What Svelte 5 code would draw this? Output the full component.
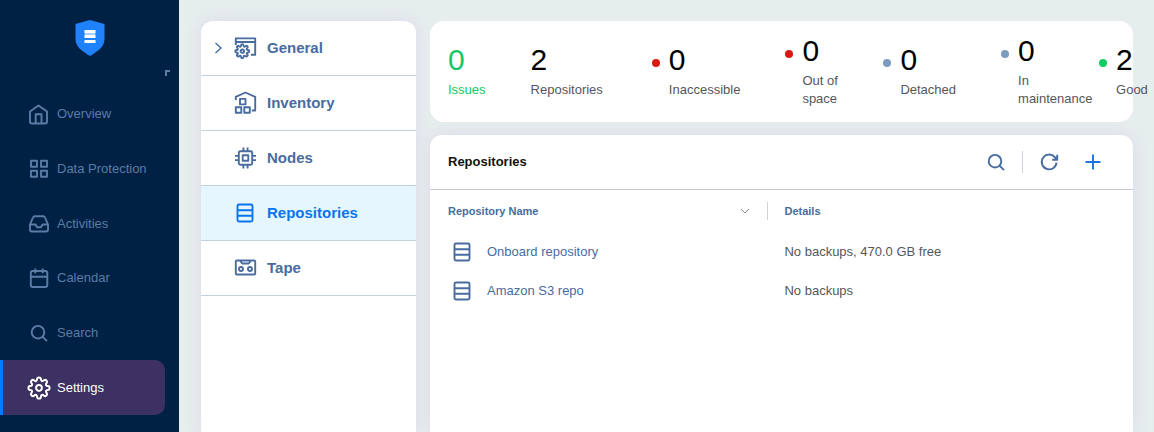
<script>
let active_page = 'Settings';
let active_section = 'Repositories';

const pages = [
    { name: 'Overview', icon: 'home' },
    { name: 'Data Protection', icon: 'grid' },
    { name: 'Activities', icon: 'inbox' },
    { name: 'Calendar', icon: 'calendar' },
    { name: 'Search', icon: 'search' },
    { name: 'Settings', icon: 'gear' },
];

const sections = [
    { name: 'General', icon: 'general', expandable: true },
    { name: 'Inventory', icon: 'inventory' },
    { name: 'Nodes', icon: 'nodes' },
    { name: 'Repositories', icon: 'repo' },
    { name: 'Tape', icon: 'tape' },
];

const states = [
    { count: 0, label: 'Inaccessible', kind: 'error' },
    { count: 0, label: 'Out of space', kind: 'error', narrow: true },
    { count: 0, label: 'Detached', kind: 'idle' },
    { count: 0, label: 'In maintenance', kind: 'idle', narrow: true },
    { count: 2, label: 'Good', kind: 'good' },
];

const repositories = [
    { name: 'Onboard repository', details: 'No backups, 470.0 GB free' },
    { name: 'Amazon S3 repo', details: 'No backups' },
];

// closed cog outline with eight teeth, smoothed through the middle of each edge
const cog = (cx, cy, inner, outer) => {
    const pts = [];
    for (let i = 0; i < 8; i++) {
        const a = (i * Math.PI) / 4;
        for (const [da, r] of [[-0.26, inner], [-0.17, outer], [0.17, outer], [0.26, inner]]) {
            pts.push([cx + r * Math.sin(a + da), cy - r * Math.cos(a + da)]);
        }
    }
    const mid = (p, q) => `${((p[0] + q[0]) / 2).toFixed(2)} ${((p[1] + q[1]) / 2).toFixed(2)}`;
    let d = 'M' + mid(pts[pts.length - 1], pts[0]);
    pts.forEach((p, i) => {
        d += `Q${p[0].toFixed(2)} ${p[1].toFixed(2)} ${mid(p, pts[(i + 1) % pts.length])}`;
    });
    return d + 'Z';
};

const icons = {
    home: 'M3 9.5 11.5 3.500 20 9.5V19.500a2 2 0 0 1-2 2H5a2 2 0 0 1-2-2ZM8.7 21.500v-9.3h5.8V21.500',
    grid: 'M4 3.8h6v6H4ZM14 3.8h6v6h-6ZM4 13.8h6v6H4ZM14 13.8h6v6h-6Z',
    inbox: 'M3 12.500 6 5.500a2 2 0 0 1 1.800-1.300h8.400A2 2 0 0 1 18 5.500l3 7V17.500a2 2 0 0 1-2 2H5a2 2 0 0 1-2-2ZM3 12.500h5.500l1.500 2.700h4l1.500-2.700H21',
    calendar: 'M5.500 5h13A1.800 1.800 0 0 1 20.300 6.800V19a2 2 0 0 1-2 2H5.800a2 2 0 0 1-2-2V6.800A1.800 1.800 0 0 1 5.500 5ZM3.800 10.700h16.500M8.300 2.600v4.600M15.700 2.600v4.600',
    search: 'M17.300 11.200a6.300 6.300 0 1 1-12.600 0a6.300 6.300 0 0 1 12.600 0ZM15.500 15.700l4.500 4.500',
    gear: cog(12, 12, 7.6, 10.7) + 'M14.900 12a2.900 2.900 0 1 1-5.800 0a2.900 2.900 0 0 1 5.800 0Z',
    general: 'M2.800 9V2.400h19.400V18.800H18M2.800 6h19.400' + cog(9.300, 15.200, 4.900, 7.100) + 'M11 15.200a1.700 1.700 0 1 1-3.400 0a1.700 1.700 0 0 1 3.400 0Z',
    inventory: 'M2.800 9V5.800L12.500 1.500l9.700 4.300V19.500H18.800M7 7.900h5.500v5.500H7ZM2.800 16.200h5.500v5.500H2.800ZM11.300 16.200h5.500v5.500h-5.500Z',
    nodes: 'M7.300 5.300h10.400a1.500 1.500 0 0 1 1.500 1.500v10.400a1.500 1.500 0 0 1-1.500 1.500H7.300a1.500 1.500 0 0 1-1.500-1.500V6.800a1.500 1.500 0 0 1 1.500-1.500ZM9.700 9.200h5.600v5.600H9.700ZM10.400 1.500v3.800M14.600 1.500v3.800M10.400 18.700v3.800M14.600 18.700v3.800M2 9.900h3.800M2 14.100h3.800M19.200 9.900H23M19.200 14.100H23',
    repo: 'M6 3.500h12a1.500 1.500 0 0 1 1.500 1.500v14a1.500 1.500 0 0 1-1.500 1.500H6a1.500 1.500 0 0 1-1.500-1.500v-14A1.500 1.500 0 0 1 6 3.500ZM4.500 9.200h15M4.500 14.800h15',
    tape: 'M3.800 4.500h17.400a1 1 0 0 1 1 1v12a1 1 0 0 1-1 1H3.800a1 1 0 0 1-1-1v-12a1 1 0 0 1 1-1ZM7 4.500l2.200 3h6.600l2.200-3M10 13a2 2 0 1 1-4 0a2 2 0 0 1 4 0ZM19 13a2 2 0 1 1-4 0a2 2 0 0 1 4 0Z',
    refresh: 'M19.500 12.600A7.400 7.400 0 1 1 17.600 7L20 9.300M20.200 4.800v5h-5',
    plus: 'M12 4.500v15M4.500 12h15',
};
</script>

{#snippet icon(name)}
    <svg class="icon {name}" viewBox="0 0 24 24" aria-hidden="true"><path d={icons[name]} /></svg>
{/snippet}

<div class="app">
    <aside>
        <svg class="logo" viewBox="0 0 30 36" role="img" aria-label="Home">
            <path d="M15 0 29.500 4V19C29.500 27 23 31 15 36C7 31 .5 27 .5 19V4Z" fill="#1f82fb" />
            <path d="M9.500 10h11v3h-11ZM9.500 15h11v3h-11ZM9.500 20h11v3h-11Z" fill="#fff" />
            <path d="M9.500 13h11v2h-11Z" fill="#a9cdfd" />
        </svg>
        <button class="collapse" aria-label="Collapse menu">
            <svg viewBox="0 0 6 6"><path d="M1 6V1H5" /></svg>
        </button>
        <nav class="pages">
            {#each pages as p}
                <a href="#{p.icon}" class:active={p.name == active_page}>
                    {@render icon(p.icon)}
                    {p.name}
                </a>
            {/each}
        </nav>
    </aside>

    <nav class="sections">
        {#each sections as s}
            <a href="#{s.icon}" class:active={s.name == active_section}>
                <svg class="arrow" viewBox="0 0 10 14" aria-hidden="true">
                    {#if s.expandable}<path d="M2.500 2 8 7 2.500 12" />{/if}
                </svg>
                {@render icon(s.icon)}
                {s.name}
            </a>
        {/each}
    </nav>

    <main>
        <section class="stats">
            <div class="stat issues">
                <span class="count">0</span>
                <span class="label">Issues</span>
            </div>
            <div class="stat">
                <span class="count">2</span>
                <span class="label">Repositories</span>
            </div>
            <div class="divider"></div>
            {#each states as s}
                <div class="stat state" class:narrow={s.narrow}>
                    <i class="dot {s.kind}"></i>
                    <span class="count">{s.count}</span>
                    <span class="label">{s.label}</span>
                </div>
            {/each}
        </section>

        <section class="panel">
            <header>
                <h1>Repositories</h1>
                <button aria-label="Search">{@render icon('search')}</button>
                <span class="separator"></span>
                <button aria-label="Refresh">{@render icon('refresh')}</button>
                <button class="add" aria-label="Add repository">{@render icon('plus')}</button>
            </header>
            <table>
                <thead>
                    <tr>
                        <th class="name">
                            <div class="head">
                                Repository Name
                                <svg class="sort" viewBox="0 0 10 8" aria-hidden="true"><path d="M1 2 5 6 9 2" /></svg>
                            </div>
                        </th>
                        <th><div class="head second">Details</div></th>
                    </tr>
                </thead>
                <tbody>
                    {#each repositories as r}
                        <tr>
                            <td><a href="#repo">{@render icon('repo')}{r.name}</a></td>
                            <td class="details">{r.details}</td>
                        </tr>
                    {/each}
                </tbody>
            </table>
        </section>
    </main>
</div>

<style>
:global(body) {
    margin: 0;
}

.app {
    display: flex;
    min-height: 100vh;
    box-sizing: border-box;
    background: #e6eded;
    color: #55565a;
    font: 13px/18px "Liberation Sans", Arial, sans-serif;
    overflow: hidden;
}

a {
    color: inherit;
    text-decoration: none;
}

button {
    display: flex;
    padding: 0;
    border: 0;
    background: none;
    color: inherit;
    cursor: pointer;
}

svg {
    display: block;
    flex: none;
    fill: none;
    stroke: currentColor;
}

.icon {
    width: 24px;
    height: 24px;
    stroke-width: 1.9;
    stroke-linejoin: round;
}

/* left bar */
aside {
    display: flex;
    flex-direction: column;
    flex: none;
    width: 179px;
    padding-top: 20px;
    box-sizing: border-box;
    background: #002143;
    color: #5b7ca6;
}

.logo {
    width: 30px;
    height: 36px;
    align-self: center;
    stroke: none;
}

.collapse {
    align-self: flex-end;
    margin: 14px 8px 11px 0;
}

.collapse svg {
    width: 6px;
    height: 6px;
    stroke-width: 2;
}

.pages {
    display: flex;
    flex-direction: column;
    min-height: 328px;
    margin-right: 14px;
}

.pages a {
    display: flex;
    flex: 1;
    align-items: center;
    gap: 6px;
    padding-left: 24px;
    border-left: 3px solid transparent;
    border-radius: 0 10px 10px 0;
}

.pages a.active {
    border-left-color: #0a78ff;
    background: #3d3062;
    color: #fff;
}

.pages .active .icon {
    stroke-width: 2;
}

/* settings sections */
.sections {
    display: flex;
    flex-direction: column;
    flex: none;
    width: 215px;
    margin: 21px 14px 0 22px;
    border-radius: 12px 12px 0 0;
    background: #fff;
    box-shadow: 0 0 16px #dcdaea;
    color: #486c9f;
    font-size: 15px;
    font-weight: bold;
    overflow: hidden;
}

.sections a {
    display: flex;
    align-items: center;
    height: 54px;
    padding-left: 12px;
    border-bottom: 1px solid #c3d1d8;
}

.sections a.active {
    background: #e6f6fe;
    color: #0a73ee;
}

.arrow {
    width: 10px;
    height: 14px;
    margin-right: 10px;
    stroke-width: 1.4;
}

.sections .icon {
    margin-right: 10px;
}

main {
    display: flex;
    flex-direction: column;
    flex: 1;
    gap: 13px;
    min-width: 0;
    margin: 21px 21px 0 0;
}

/* counters */
.stats {
    display: flex;
    align-items: center;
    gap: 45px;
    min-height: 101px;
    padding-left: 18px;
    border-radius: 14px;
    background: #fff;
}

.stat {
    display: flex;
    flex-direction: column;
    flex: none;
}

.count {
    color: #000;
    font-size: 30px;
    line-height: 30px;
    margin-bottom: 6px;
}

.issues .count,
.issues .label {
    color: #14c768;
}

.divider {
    width: 1px;
    height: 55px;
    margin: 0 -13px 0 -28px;
    background: #d3d6da;
}

.state {
    display: grid;
    grid-template-columns: 17px auto;
    align-items: center;
}

.state .label {
    grid-column: 2;
}

/* long labels wrap and may run into the gap after them */
.narrow .label {
    width: 36px;
}

.dot {
    width: 8px;
    height: 8px;
    border-radius: 50%;
}

.error {
    background: #d9190f;
}

.idle {
    background: #7c9cbf;
}

.good {
    background: #12cb62;
}

/* repositories */
.panel {
    flex: 1;
    border-radius: 12px 12px 0 0;
    background: #fff;
    box-shadow: 0 0 16px #dcdaea;
}

header {
    display: flex;
    align-items: center;
    height: 54px;
    padding: 0 28px 0 18px;
    border-bottom: 1px solid #c6ccd3;
    color: #486c9f;
}

h1 {
    flex: 1;
    margin: 0;
    color: #111;
    font-size: 13px;
}

.separator {
    width: 1px;
    height: 22px;
    margin: 0 14px;
    background: #cdd3da;
}

.add {
    margin-left: 20px;
    color: #1a73e8;
}

table {
    width: 100%;
    border-collapse: collapse;
    table-layout: fixed;
}

th {
    height: 42px;
    padding: 0;
    color: #486c9f;
    font-size: 11px;
    text-align: left;
    vertical-align: middle;
}

.name {
    width: 48%;
}

.head {
    display: flex;
    align-items: center;
    justify-content: space-between;
    padding: 0 17px 0 18px;
}

.second {
    padding-left: 16px;
    border-left: 1px solid #cdd3da;
}

.sort {
    width: 10px;
    height: 8px;
    color: #8a93a0;
}

td {
    height: 39px;
    padding: 0 0 0 20px;
}

td a {
    display: flex;
    align-items: center;
    gap: 13px;
    color: #486c9f;
}

td.details {
    padding-left: 17px;
}
</style>
